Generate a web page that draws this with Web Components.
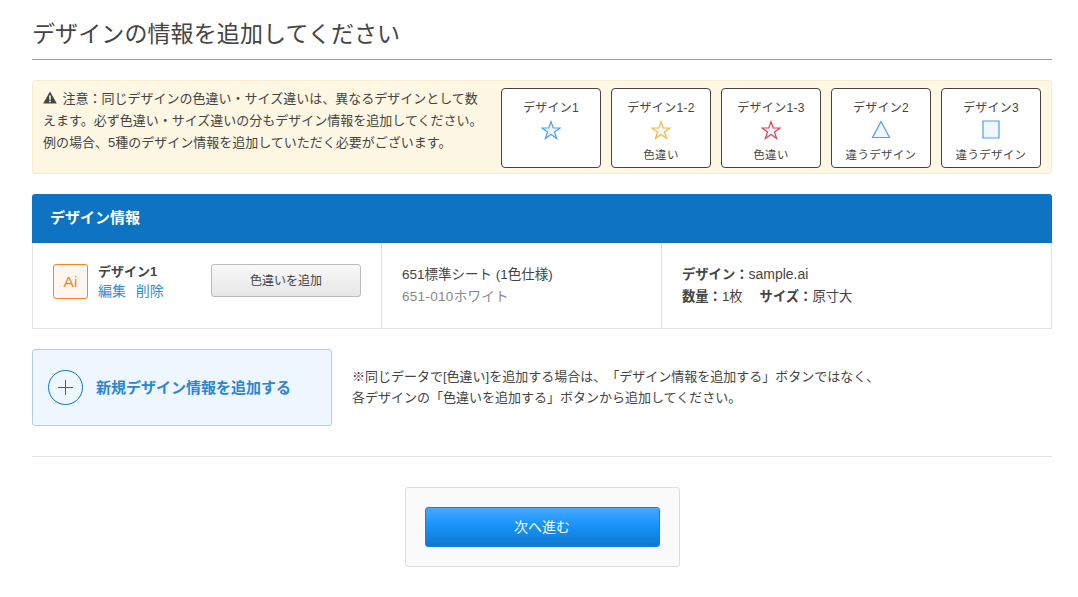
<!DOCTYPE html>
<html lang="ja">
<head>
<meta charset="utf-8">
<title>デザイン情報</title>
<style>
html, body { margin: 0; background: #fff; }
body { font-family: "Liberation Sans", "Noto Sans CJK JP", sans-serif; color: #444; text-spacing-trim: space-all; }
</style>
</head>
<body>
<order-page>
  <page-title>デザインの情報を追加してください</page-title>
  <notice-box>
    <design-sample name="デザイン1" shape="star" color="#4a9eff"></design-sample>
    <design-sample name="デザイン1-2" shape="star" color="#fbb73c" note="色違い"></design-sample>
    <design-sample name="デザイン1-3" shape="star" color="#e2424c" note="色違い"></design-sample>
    <design-sample name="デザイン2" shape="triangle" color="#4a9eff" note="違うデザイン"></design-sample>
    <design-sample name="デザイン3" shape="square" color="#4a9eff" note="違うデザイン"></design-sample>
  </notice-box>
  <design-panel></design-panel>
  <add-row></add-row>
  <next-box></next-box>
</order-page>

<script>
class OrderPage extends HTMLElement {
  constructor() {
    super();
    const shadow = this.attachShadow({mode: 'open'});
    shadow.innerHTML = `
      <style>
        :host { display: block; width: 1020px; margin: 0 auto 0 32px; padding-top: 18px; }
      </style>
      <slot></slot>`;
  }
}

class PageTitle extends HTMLElement {
  constructor() {
    super();
    const shadow = this.attachShadow({mode: 'open'});
    shadow.innerHTML = `
      <style>
        :host { display: block; height: 41px; border-bottom: 1px solid #999; font-size: 23px; letter-spacing: .1px; line-height: 32px; color: #444; }
      </style>
      <slot></slot>`;
  }
}

class NoticeBox extends HTMLElement {
  constructor() {
    super();
    const shadow = this.attachShadow({mode: 'open'});
    shadow.innerHTML = `
      <style>
        :host { display: flex; box-sizing: border-box; height: 94px; margin-top: 20px; padding: 7px 10px 0; justify-content: space-between;
          background: #fdf7e3; border: 1px solid #f9edd0; border-radius: 3px; }
        .txt { width: 442px; font-size: 13px; line-height: 22px; color: #444; }
        .txt svg { width: 14px; height: 13px; vertical-align: -1px; margin-right: 2px; }
        .list { display: flex; gap: 10px; }
      </style>
      <div class="txt"><svg viewBox="0 0 14 13"><path d="M7 .5 13.800 12.600H.2Z" fill="#444"/><rect x="6.200" y="4.400" width="1.600" height="4.400" fill="#fdf7e3"/><rect x="6.200" y="9.600" width="1.600" height="1.600" fill="#fdf7e3"/></svg> 注意&#xFF1A;同じデザインの色違い・サイズ違いは、異なるデザインとして数えます。必ず色違い・サイズ違いの分もデザイン情報を追加してください。例の場合、5種のデザイン情報を追加していただく必要がございます。</div>
      <div class="list"><slot></slot></div>`;
  }
}

class DesignSample extends HTMLElement {
  constructor() {
    super();
    const shadow = this.attachShadow({mode: 'open'});
    const c = this.getAttribute('color');
    const shapes = {
      star: `<path d="M10 1.600 12.200 8H19l-5.500 4 2.100 6.500L10 14.600l-5.600 3.900L6.500 12 1 8h6.800Z"/>`,
      triangle: `<path d="M10 1.500 18.500 17.500H1.500Z"/>`,
      square: `<path d="M2 1h16v17H2Z"/>`
    };
    const note = this.getAttribute('note') || '';
    shadow.innerHTML = `
      <style>
        :host { display: flex; flex-direction: column; align-items: center; box-sizing: border-box; width: 100px; height: 80px;
          background: #fff; border: 1px solid #444; border-radius: 4px; padding-top: 10px; font-size: 12px; color: #444; }
        .n { line-height: 18px; letter-spacing: .3px; }
        svg { display: block; width: 20px; height: 20px; margin-top: 3px; fill: #f0f7fe; stroke: ${c}; stroke-width: 1.200; }
        .c { font-size: 11.500px; line-height: 16px; margin-top: 7px; letter-spacing: .3px; }
      </style>
      <div class="n">${this.getAttribute('name')}</div>
      <svg viewBox="0 0 20 20">${shapes[this.getAttribute('shape')]}</svg>
      <div class="c">${note}</div>`;
  }
}

class DesignPanel extends HTMLElement {
  constructor() {
    super();
    const shadow = this.attachShadow({mode: 'open'});
    shadow.innerHTML = `
      <style>
        :host { display: block; margin-top: 20px; }
        .head { height: 49px; background: #0f73c3; border-radius: 3px 3px 0 0; color: #fff; font-size: 15px; font-weight: bold; line-height: 48px; padding-left: 18px; }
        .body { display: grid; grid-template-columns: 348px 280px 1fr; height: 86px; box-sizing: border-box; border: 1px solid #e3e3e3; border-top: 0; font-size: 13.300px; color: #444; }
        .cell { border-left: 1px solid #e3e3e3; padding: 20px; padding-top: 21px; line-height: 22px; }
        .cell:first-child { border-left: 0; display: flex; align-items: flex-start; padding: 21px 20px 0; }
        .ai { box-sizing: border-box; width: 35px; height: 35px; border: 1px solid #f5852b; border-radius: 3px; background: #fff6f0; color: #f5852b;
          font-size: 15.500px; line-height: 33px; text-align: center; }
        .name { margin-left: 10px; width: 113px; line-height: 18px; margin-top: -1px; }
        .name b { display: block; font-size: 13px; margin-bottom: 1px; }
        .name a { color: #2f8fd8; font-size: 14px; margin-right: 6px; }
        .btn { box-sizing: border-box; width: 150px; height: 33px; border: 1px solid #bbb; border-radius: 3px;
          background: linear-gradient(#f9f9f9, #e6e6e6); font-size: 12px; line-height: 32px; text-align: center; color: #444; }
        .spec { font-size: 13.500px; }
        .gray { color: #888; letter-spacing: .3px; }
        .info { padding-top: 20px; }
        .file { font-size: 14px; }
        .gap { margin-left: 17px; }
      </style>
      <div class="head">デザイン情報</div>
      <div class="body">
        <div class="cell">
          <div class="ai">Ai</div>
          <div class="name"><b>デザイン1</b><a>編集</a> <a>削除</a></div>
          <div class="btn">色違いを追加</div>
        </div>
        <div class="cell spec">651標準シート (1色仕様)<br><span class="gray">651-010ホワイト</span></div>
        <div class="cell info"><b>デザイン&#xFF1A;</b><span class="file">sample.ai</span><br><b>数量&#xFF1A;</b>1枚<b class="gap">サイズ&#xFF1A;</b>原寸大</div>
      </div>`;
  }
}

class AddRow extends HTMLElement {
  constructor() {
    super();
    const shadow = this.attachShadow({mode: 'open'});
    shadow.innerHTML = `
      <style>
        :host { display: flex; align-items: center; margin-top: 20px; padding-bottom: 30px; border-bottom: 1px solid #e3e3e3; }
        .add { display: flex; align-items: center; box-sizing: border-box; width: 300px; height: 77px; padding-left: 15px;
          background: #eef7ff; border: 1px solid #b3cde6; border-radius: 3px; color: #2b86d2; font-size: 15px; font-weight: bold; }
        .add span { margin-bottom: 2px; }
        svg { width: 35px; height: 35px; margin-right: 13px; fill: none; stroke: #0f73c3; }
        .msg { margin-left: 20px; margin-bottom: 2px; font-size: 13px; line-height: 21px; color: #444; }
      </style>
      <div class="add">
        <svg viewBox="0 0 35 35"><circle cx="17.500" cy="17.500" r="17"/><path d="M17.500 10v15M10 17.500h15"/></svg>
        <span>新規デザイン情報を追加する</span>
      </div>
      <div class="msg">※同じデータで[色違い]を追加する場合は、「デザイン情報を追加する」ボタンではなく、<br>各デザインの「色違いを追加する」ボタンから追加してください。</div>`;
  }
}

class NextBox extends HTMLElement {
  constructor() {
    super();
    const shadow = this.attachShadow({mode: 'open'});
    shadow.innerHTML = `
      <style>
        :host { display: flex; align-items: center; justify-content: center; box-sizing: border-box; width: 275px; height: 80px; margin: 30px auto 0;
          background: #fafafa; border: 1px solid #ddd; border-radius: 3px; }
        .next { width: 235px; height: 40px; box-sizing: border-box; border: 1px solid #1b7fd0; border-radius: 3px;
          background: linear-gradient(#4aa8ff, #1a96fb 40%, #0f78d0); color: #fff; font-size: 14px; line-height: 38px; text-align: center; }
      </style>
      <div class="next">次へ進む</div>`;
  }
}

customElements.define('order-page', OrderPage);
customElements.define('page-title', PageTitle);
customElements.define('notice-box', NoticeBox);
customElements.define('design-sample', DesignSample);
customElements.define('design-panel', DesignPanel);
customElements.define('add-row', AddRow);
customElements.define('next-box', NextBox);
</script>
</body>
</html>
